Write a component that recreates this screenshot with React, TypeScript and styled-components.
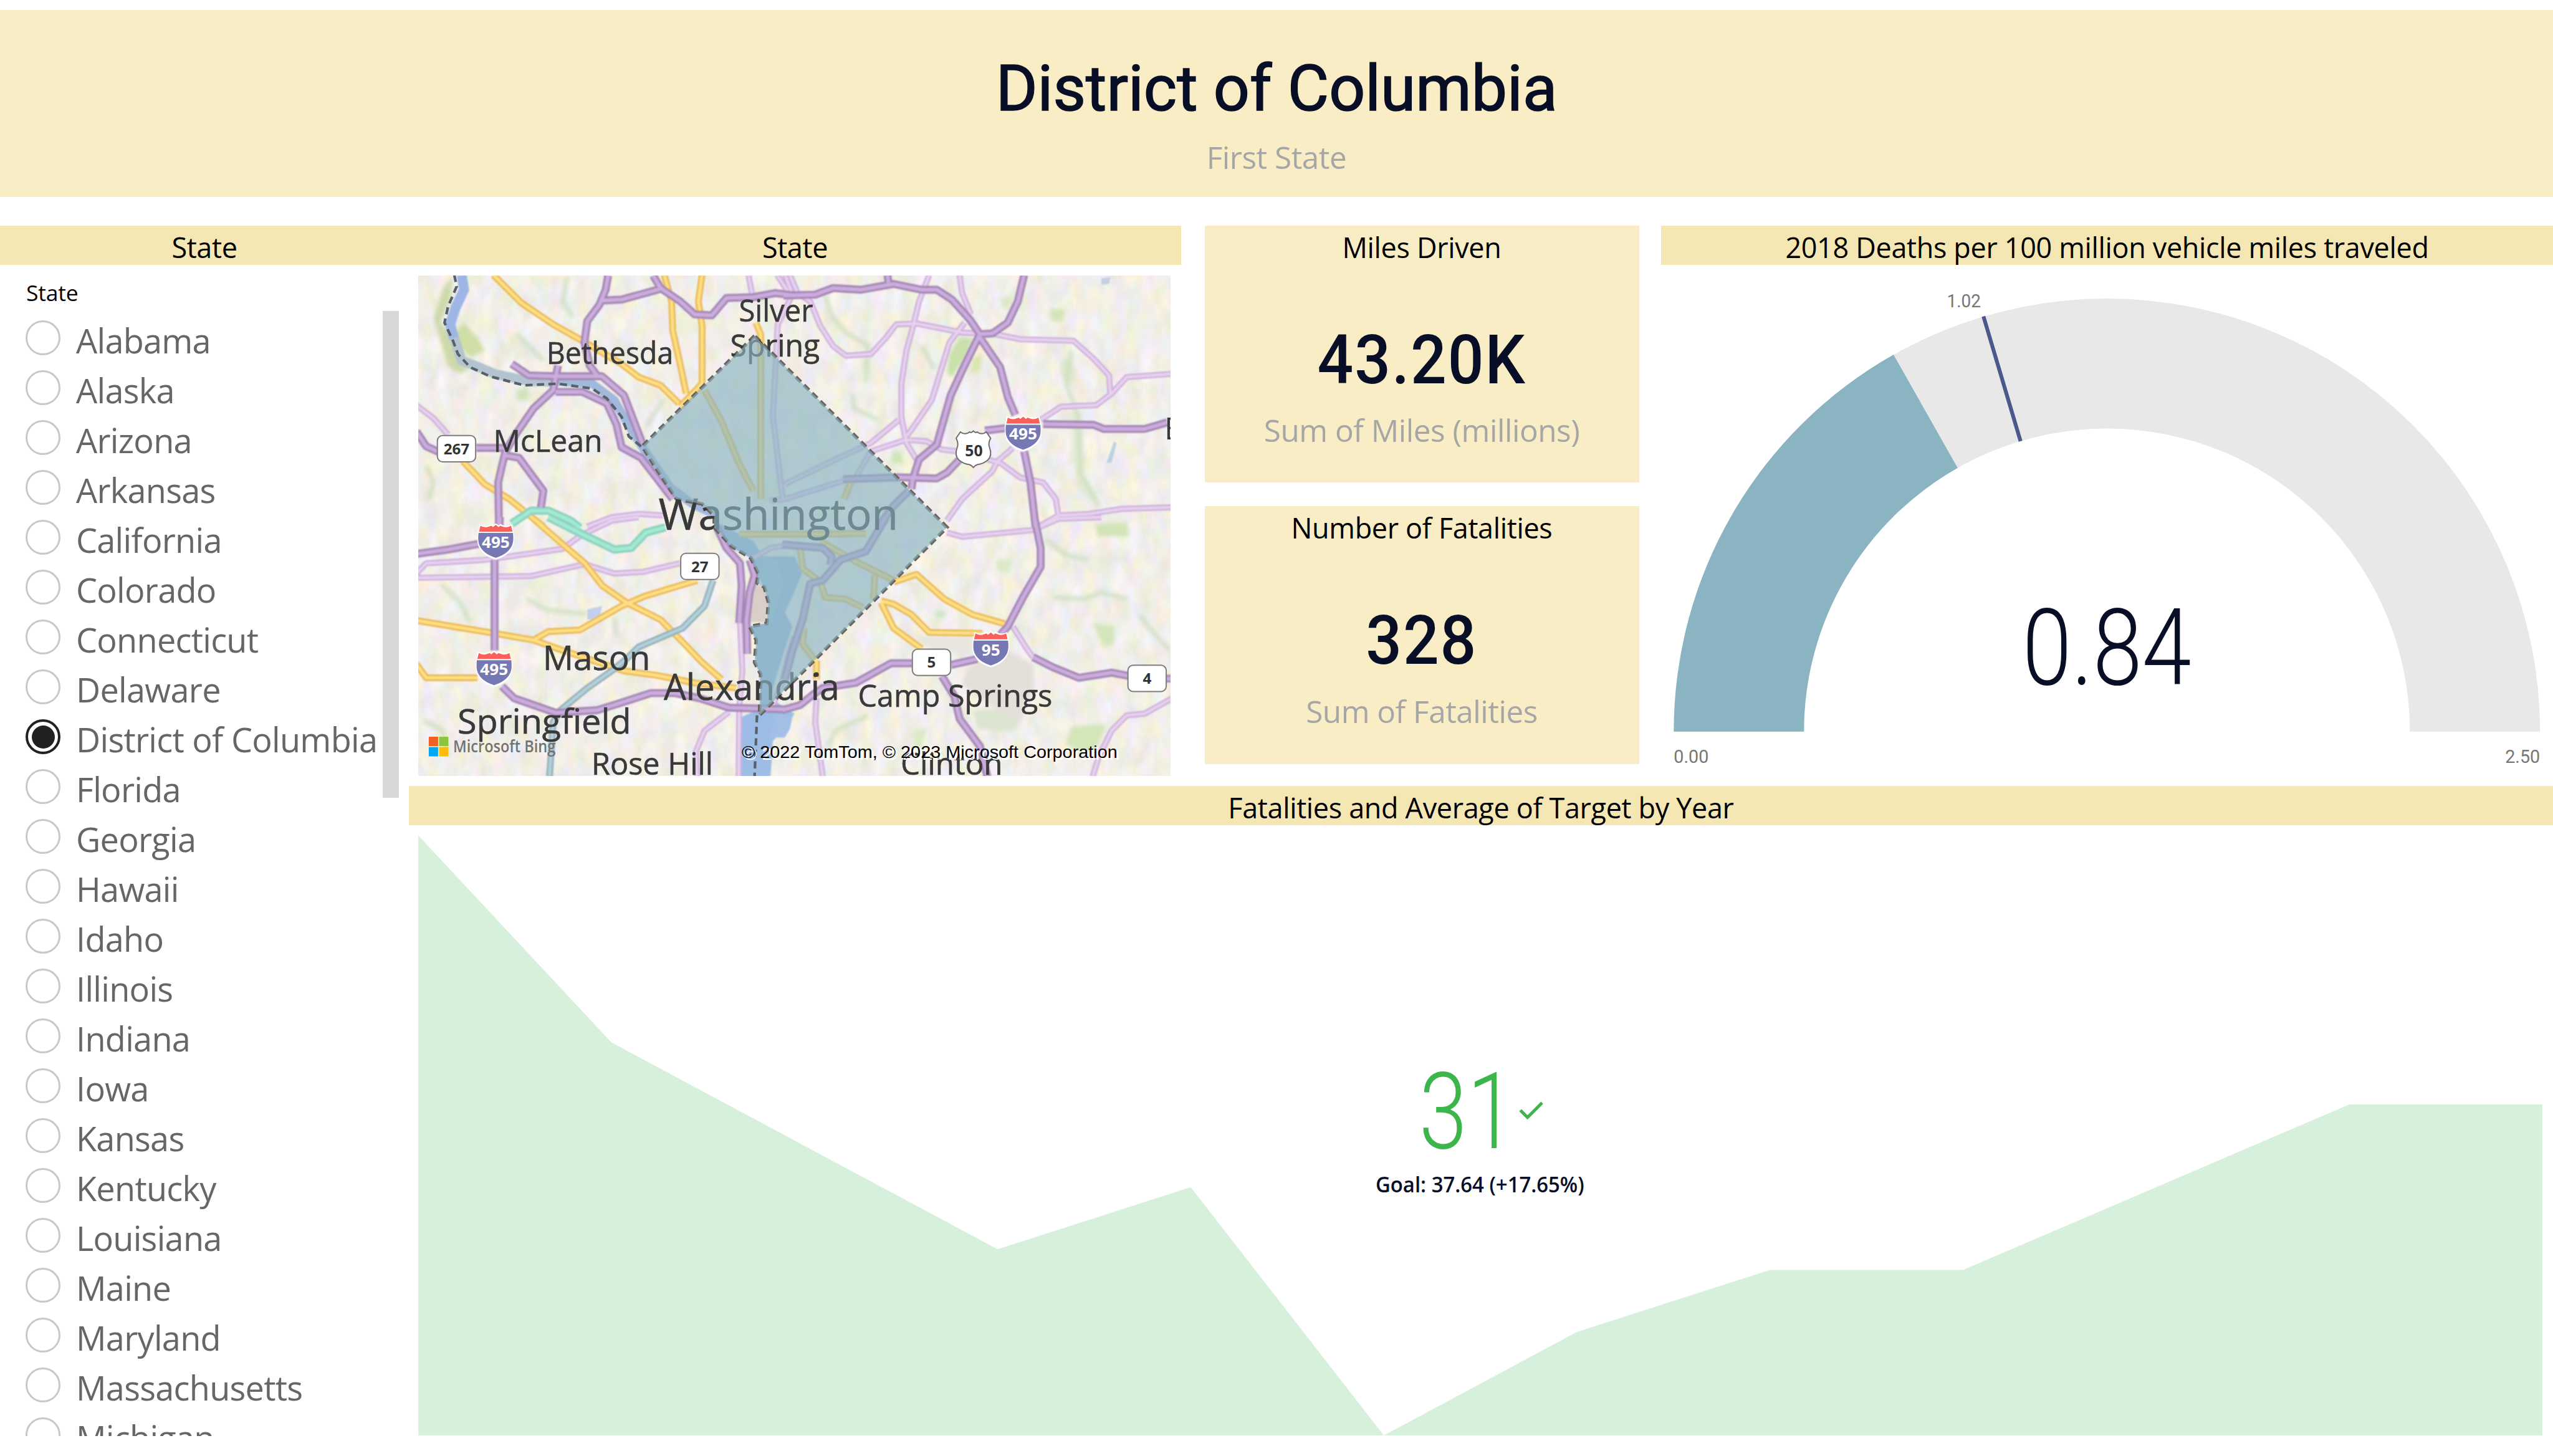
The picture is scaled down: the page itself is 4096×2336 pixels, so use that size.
import React from "react";
import styled, { createGlobalStyle } from "styled-components";

const sans = `"Open Sans", "Noto Sans", sans-serif`;
const din = `Roboto, "Open Sans", sans-serif`;

const GlobalStyle = createGlobalStyle`
  * { box-sizing: border-box; }
  body { margin: 0; background: #fff; font-family: ${sans}; }
`;

const Page = styled.div`
  width: 4096px;
  height: 2336px;
  padding-top: 16px;
  overflow: hidden;
  background: #fff;
  display: flex;
  flex-direction: column;
  gap: 46px;
`;

const Header = styled.header`
  height: 300px;
  flex: none;
  background: #f9edc6;
  display: flex;
  flex-direction: column;
  align-items: center;
  padding-top: 66px;
`;

const HeaderTitle = styled.h1`
  margin: 0;
  font: 400 102px/120px ${din};
  letter-spacing: 0;
  color: #070e26;
  -webkit-text-stroke: 1.6px #070e26;
`;

const Caption = styled.div<{ $top: number }>`
  margin-top: ${(p) => p.$top}px;
  font-size: 49.5px;
  line-height: 68px;
  letter-spacing: -0.5px;
  color: #a6a6a6;
`;

const Body = styled.main`
  display: grid;
  grid-template-columns: 656px 3440px;
  height: 1942px;
`;

const VisualTitle = styled.h2<{ $plain?: boolean }>`
  margin: 0;
  height: 63px;
  flex: none;
  padding-top: 4px;
  text-align: center;
  font-size: 45px;
  font-weight: 400;
  line-height: 61px;
  letter-spacing: -0.36px;
  white-space: nowrap;
  color: #000;
  background: ${(p) => (p.$plain ? "transparent" : "#f4e7b3")};
`;

const Slicer = styled.section`
  display: flex;
  flex-direction: column;
  min-height: 0;
`;

const SlicerHead = styled.div`
  padding: 20px 0 0 42px;
  font-size: 35.5px;
  line-height: 48px;
  letter-spacing: -0.2px;
  height: 74px;
  flex: none;
`;

const SlicerBody = styled.div`
  flex: 1;
  min-height: 0;
  display: flex;
  overflow: hidden;
`;

const StateList = styled.ul`
  list-style: none;
  margin: 0;
  padding: 3px 0 0 41px;
  width: 614px;
  flex: none;
`;

const StateRow = styled.li`
  height: 80px;
  display: flex;
  align-items: center;
  gap: 25px;
`;

const Radio = styled.span<{ $on: boolean }>`
  width: 56px;
  height: 56px;
  flex: none;
  border-radius: 50%;
  border: ${(p) => (p.$on ? "4px solid #212121" : "3.6px solid #c8c8c8")};
  display: grid;
  place-items: center;
  &::after {
    content: "";
    width: 37px;
    height: 37px;
    border-radius: 50%;
    background: ${(p) => (p.$on ? "#212121" : "transparent")};
  }
`;

const StateName = styled.span`
  padding-top: 8px;
  font-size: 54px;
  line-height: 72px;
  letter-spacing: -0.7px;
  color: #666;
  white-space: nowrap;
`;

const ScrollThumb = styled.div`
  width: 26px;
  height: 781px;
  background: #d9d8d6;
`;

const Right = styled.div`
  display: grid;
  grid-template-rows: 899px 1043px;
`;

const TopRow = styled.div`
  display: grid;
  grid-template-columns: 1239px 735px 1431px;
  justify-content: space-between;
`;

const Visual = styled.section`
  display: flex;
  flex-direction: column;
  min-width: 0;
`;

const MapFrame = styled.div`
  margin: 17px 0 0 15px;
  width: 1207px;
  height: 803px;
  overflow: hidden;
  svg { display: block; }
`;

const Cards = styled.div`
  padding: 0 18px 0 20px;
  display: flex;
  flex-direction: column;
  gap: 38px;
`;

const Card = styled.section<{ $h: number }>`
  height: ${(p) => p.$h}px;
  background: #f9edc6;
  display: flex;
  flex-direction: column;
  align-items: center;
`;

const CardValue = styled.div`
  margin-top: 93px;
  font: 500 110px/120px ${din};
  letter-spacing: 2px;
  transform: scaleX(0.925);
  color: #070e26;
`;

const Drawing = styled.svg`
  display: block;
  flex: none;
`;

const Attribution = styled.text`
  font-family: "Liberation Sans", Arial, sans-serif;
  font-size: 35.5px;
  fill: #000;
  text-shadow: 3px 3px 0 #fff;
`;

const states = [
  "Alabama", "Alaska", "Arizona", "Arkansas", "California", "Colorado", "Connecticut",
  "Delaware", "District of Columbia", "Florida", "Georgia", "Hawaii", "Idaho", "Illinois",
  "Indiana", "Iowa", "Kansas", "Kentucky", "Louisiana", "Maine", "Maryland",
  "Massachusetts", "Michigan",
];

/* ---------- map ---------- */

// The map is digitised in four sheets; each has its own origin and scale.
const sheets: Record<number, [number, number, number, number]> = {
  1: [860, 560, 0.5102, 0.3444],
  2: [1640, 560, 0.5293, 0.3444],
  3: [860, 1080, 0.5102, 0.3571],
  4: [1640, 1080, 0.5293, 0.3571],
};

function pts(sheet: number, src: string) {
  const [ox, oy, sx, sy] = sheets[sheet];
  const n = src.trim().split(/\s+/).map(Number);
  const out: string[] = [];
  for (let i = 0; i < n.length; i += 2) {
    out.push(`${(ox + n[i] * sx).toFixed(1)} ${(oy + n[i + 1] * sy).toFixed(1)}`);
  }
  return out.join(" L");
}
const line = (sheet: number, src: string) => "M" + pts(sheet, src);

const motorways: [number, string][] = [
  [1, "805 44 795 130 770 220 720 320 708 450 730 590 765 660"],
  [1, "990 44 1020 120 1100 200 1160 280 1230 285 1290 180 1400 175 1490 150 1568 165"],
  [1, "780 195 860 190 1020 125"],
  [1, "410 580 480 650 590 655 780 655 870 770 950 1080"],
  [1, "600 590 580 740 500 850 430 1000 385 1110 370 1200 355 1300 358 1568"],
  [1, "590 750 700 750 800 820 840 950 860 1085 940 1150 1070 1400"],
  [1, "20 990 60 1080 120 1120"],
  [1, "265 1090 395 1090"],
  [1, "385 1135 440 1150 500 1270 540 1350 530 1450"],
  [2, "-5 165 120 160 190 120 300 130 430 95 540 130 600 130 660 190 730 310 770 400"],
  [2, "405 40 410 95"],
  [2, "945 40 920 200 880 330 820 395 770 400 700 620 655 770 620 960 600 1070 530 1160 505 1280 500 1340"],
  [2, "770 420 850 600 880 780 910 890"],
  [2, "945 1110 970 1300 990 1568"],
  [2, "230 1280 450 1268 600 1275 640 1240 690 1160"],
  [2, "790 985 870 970"],
  [2, "1020 945 1220 950 1260 975 1420 975 1510 935"],
  [2, "490 1350 430 1440 370 1568"],
  [3, "20 215 150 190 280 155"],
  [3, "362 0 360 60"],
  [3, "340 250 340 780"],
  [3, "370 990 420 1060 590 1145 760 1130 850 1090 980 1030 1080 1030 1180 1060 1300 1115 1530 1125"],
  [3, "1250 60 1290 180 1345 270 1352 400 1342 620"],
  [3, "1385 250 1405 340 1385 440 1372 600 1375 800"],
  [4, "985 0 1010 180 1010 290 940 470 880 640 850 690"],
  [4, "-10 1130 60 1100 110 1040 150 1000 280 970 420 855 510 855"],
  [4, "655 865 760 830"],
  [4, "980 820 1060 880 1160 940 1290 910 1360 930"],
  [4, "1500 945 1530 945"],
  [4, "620 930 670 1050 690 1180 770 1340 800 1520"],
  [4, "-10 160 150 180 185 230 180 280"],
  [4, "400 0 320 200 220 250 150 370 100 390 70 600 30 780 0 950"],
];

const highways: [number, string][] = [
  [1, "20 830 90 910 150 1010"],
  [1, "720 1568 820 1510 930 1490 1030 1500"],
  [1, "1380 40 1400 200"],
  [1, "1530 40 1560 160 1500 340 1480 900 1520 1400"],
  [2, "20 40 50 150 100 200 140 350 190 470 240 530 340 520 400 420 440 340 520 335 620 365 700 390 830 400 930 430 1140 440 1220 550 1280 650 1285 760"],
  [2, "-30 40 20 160"],
  [2, "570 40 530 200 510 330 480 500 460 700 460 900 480 1060 520 1160"],
  [2, "690 40 700 150 735 280"],
  [2, "710 330 650 450 620 600 580 800 500 980 480 1020"],
  [2, "450 920 340 1060 200 1160 0 1310"],
  [2, "340 1110 480 1040 560 1050 620 1100 680 1110"],
  [2, "1010 920 1090 840 1230 830 1290 760 1350 660 1530 640"],
  [2, "900 1090 840 1170 820 1230 700 1400 640 1530"],
  [2, "800 1160 850 1180 930 1270 1020 1300 1070 1400 1080 1500 1200 1490 1330 1460 1530 1450"],
  [2, "1080 1500 1010 1560"],
  [2, "-60 1410 0 1400 230 1290"],
  [2, "340 1110 280 1270"],
  [3, "20 355 490 345 600 310 710 275 830 330 950 320 1100 270"],
  [3, "20 330 60 270 300 250 500 210 620 185 690 110 820 20 930 0"],
  [3, "1345 600 1355 900 1342 1120 1340 1520"],
  [3, "1300 1140 1200 1250 1165 1370 1170 1520"],
  [3, "1568 160 1470 180 1400 240"],
  [3, "1568 700 1540 830 1520 960 1480 1100"],
  [4, "900 640 960 780 980 820"],
  [4, "640 90 700 115 980 75 1080 10 1250 0"],
  [4, "125 1060 120 1200 150 1520"],
  [4, "1530 1060 1420 1150 1350 1160 1290 1250 1240 1400 1215 1520"],
];

const arterials: [number, string][] = [
  [1, "335 40 450 210 580 340 700 440 860 580 930 660 1020 710 1095 820"],
  [1, "1035 40 1065 200 1070 380 1100 580 1125 760"],
  [1, "1190 40 1175 200 1190 350 1190 700 1100 840"],
  [1, "210 1170 300 1310 400 1400 540 1568"],
  [1, "1410 330 1430 400 1430 1400"],
  [1, "1200 740 1270 930 1340 1180 1400 1350"],
  [2, "260 1300 235 1400"],
  [3, "500 10 620 160 710 270 780 400 880 500 1020 600 1110 730 1190 850 1270 950"],
  [3, "20 605 340 680 500 720 560 670 690 660 860 520 960 460 1170 370"],
  [3, "500 720 620 780 870 900 1000 925 1160 970 1330 1000"],
  [3, "20 860 60 940 270 940"],
  [4, "430 380 520 335 630 480 740 570 870 625"],
  [4, "380 490 430 510 500 570 570 675 780 680"],
  [4, "380 500 430 650 540 770"],
  [4, "125 840 125 950"],
  [4, "60 170 70 300 140 380 160 470 240 480 310 530"],
  [4, "-180 100 140 100 320 95"],
  [4, "140 140 280 260 430 370"],
  [4, "355 340 350 480"],
  [4, "75 650 70 740 120 840"],
];

const tealRoads: [number, string][] = [
  [1, "410 1550 490 1470 560 1470 650 1530 690 1575"],
  [3, "560 0 700 100 830 190 900 180 960 90 1040 60"],
];

const slateRoads: [number, string][] = [
  [3, "1235 370 1200 520 1110 650 930 760 880 830 820 900 720 1000 610 1130 580 1200 565 1520"],
];

const creeks: [number, string][] = [
  [1, "640 44 620 200 660 300"],
  [1, "430 400 540 560"],
  [1, "1030 800 960 960"],
  [1, "60 1200 90 1300 70 1400"],
  [2, "160 160 180 280 240 390 330 470 320 690"],
  [2, "270 760 270 850 370 920"],
  [2, "1130 500 1110 700 1160 900 1170 1250 1240 1440"],
  [2, "540 470 590 610"],
  [3, "120 390 200 500 240 620"],
  [3, "470 480 560 545 720 565"],
  [3, "50 1190 130 1250 150 1400"],
  [3, "830 590 840 700"],
  [4, "1030 130 1110 220 1200 250"],
  [4, "1400 570 1440 650 1520 780"],
  [4, "330 1160 200 1250 170 1340"],
  [4, "1060 470 1180 480 1250 440 1350 480"],
];

const parks: [number, string, string][] = [
  [1, "170 44 130 120 90 300 110 400 150 600 200 640 240 600 180 430 120 330 160 180", "#cdd9ab"],
  [1, "215 330 270 420 300 500 240 540 190 470 170 400", "#cfdfa6"],
  [1, "430 740 480 720 480 800 430 800", "#cfe3bb"],
  [2, "690 420 745 420 720 520 660 660 640 640 650 520", "#c9e0a8"],
  [2, "745 540 780 520 770 620 730 640", "#d9e6ae"],
  [2, "1045 245 1110 250 1095 325 1050 320", "#d6e5b8"],
  [2, "1090 560 1130 540 1150 640 1130 720 1090 640", "#dde8cd"],
  [2, "425 1110 460 1110 470 1190 420 1180", "#cfe6b8"],
  [2, "1130 870 1165 870 1180 1250 1240 1440 1150 1320", "#e0ead0"],
  [2, "850 180 900 170 890 240 860 240", "#dde8c8"],
  [4, "1225 40 1350 30 1360 110 1235 115", "#d2e4b7"],
  [4, "830 250 900 245 880 330 840 310", "#dbe9c8"],
  [4, "1215 620 1300 635 1300 740 1260 760", "#d3e6bb"],
  [4, "590 550 640 550 625 590 600 590", "#cbe6c6"],
  [4, "1130 1225 1270 1215 1230 1350 1190 1390 1110 1330", "#d3e6b8"],
  [4, "740 1130 860 1120 930 1200 900 1255 760 1240", "#dce5d0"],
  [4, "510 1250 560 1230 540 1350 510 1340", "#dbeac6"],
  [4, "720 880 880 780 980 860 980 1000 930 1200 830 1120 700 980", "#e3dfd9"],
  [4, "500 700 740 700 740 800 600 790", "#e8e6df"],
];

const districtOutline =
  "M" + pts(1, "1405 410 945 1080 1000 1210 1085 1400 1190 1430 1240 1500") +
  " L" + pts(3, "1240 60 1310 170 1390 240 1420 330 1415 385 1445 410 1462 500 1455 622 1385 640 1412 720 1405 850 1430 920 1425 1160") +
  " L" + pts(4, "640 60") + " Z";

function Roads({ set, casing, core, w }: { set: [number, string][]; casing: string; core: string; w: number }) {
  const d = set.map(([s, p]) => line(s, p)).join(" ");
  return (
    <g fill="none" strokeLinejoin="round">
      <path d={d} stroke={casing} strokeWidth={w} />
      <path d={d} stroke={core} strokeWidth={w * 0.46} />
    </g>
  );
}

const places: [string, number, number, number, number][] = [
  ["Bethesda", 1142, 760, 265, 65],
  ["Silver", 1544, 672, 155, 65],
  ["Spring", 1526, 744, 187, 65],
  ["McLean", 1031, 943, 228, 65],
  ["Washington", 1376, 1107, 501, 90],
  ["Mason", 1134, 1400, 225, 71],
  ["Alexandria", 1387, 1462, 367, 75],
  ["Springfield", 956, 1533, 363, 71],
  ["Camp Springs", 1793, 1476, 406, 64],
  ["Clinton", 1882, 1618, 213, 65],
  ["Rose Hill", 1236, 1618, 254, 65],
];

function Interstate({ x, y, n }: { x: number; y: number; n: string }) {
  return (
    <g transform={`translate(${x} ${y})`}>
      <path
        d="M-34 2 Q-28 6 -22 5 Q-15 5 -10 1 L-6 4 L0 0 L6 4 L10 1 Q15 5 22 5 Q28 6 34 2 L38 22 Q40 38 36 48 Q28 68 0 76 Q-28 68 -36 48 Q-40 38 -38 22 Z"
        fill="#fff"
      />
      <path d="M-32 5 Q-26 9 -18 8 L-9 5 L-6 8 L0 3 L6 8 L9 5 L18 8 Q26 9 32 5 L35 17.5 L-35 17.5 Z" fill="#f9605c" />
      <path d="M-36 20 L36 20 Q38 37 34 46 Q26 64 0 72 Q-26 64 -34 46 Q-38 37 -36 20 Z" fill="#7678b3" />
      <text x="0" y="51" textAnchor="middle" textLength={n.length * 19.5} lengthAdjust="spacingAndGlyphs" fontSize="33" fontWeight="700" fill="#fff">{n}</text>
    </g>
  );
}

function RouteBox({ x, y, n }: { x: number; y: number; n: string }) {
  return (
    <g transform={`translate(${x} ${y})`}>
      <rect x="1" y="1" width="80" height="55" rx="11" fill="#fff" stroke="#7d7d7d" strokeWidth="2.6" />
      <text x="41" y="40" textAnchor="middle" textLength={n.length * 18} lengthAdjust="spacingAndGlyphs" fontSize="31" fontWeight="700" fill="#333">{n}</text>
    </g>
  );
}

function StateMap() {
  return (
    <svg width="1207" height="803" viewBox="874 575 1572 1046" preserveAspectRatio="none" fontFamily={`"Open Sans", sans-serif`}>
      <defs>
        <filter id="terrain" x="0" y="0" width="100%" height="100%" colorInterpolationFilters="sRGB">
          <feTurbulence type="fractalNoise" baseFrequency="0.034 0.02" numOctaves="4" seed="11" />
          <feColorMatrix values="0.12 0 0 0 0.887  0.04 0.08 0 0 0.876  0 0 0.24 0 0.79  0 0 0 0 1" />
        </filter>
        <filter id="soften"><feGaussianBlur stdDeviation="4.5" /></filter>
        <filter id="tile"><feGaussianBlur stdDeviation="1.1" /></filter>
      </defs>
      <rect x="874" y="575" width="1572" height="1046" fill="#f1ede4" />
      <rect x="874" y="575" width="1572" height="1046" filter="url(#terrain)" />
      <g filter="url(#soften)">
        {parks.map(([s, p, c], i) => <path key={i} d={line(s, p) + "Z"} fill={c} />)}
        <path d={creeks.map(([s, p]) => line(s, p)).join(" ")} fill="none" stroke="#c9dcbb" strokeWidth="9" strokeLinejoin="round" opacity="0.75" />
      </g>
      <g filter="url(#tile)">
        <path d={line(1, "205 40 215 130 180 240 158 340 175 430")} fill="none" stroke="#9db6e6" strokeWidth="21" strokeLinejoin="round" />
        <path d={line(1, "175 420 205 560 260 590 340 640 480 685 590 690")} fill="none" stroke="#b3c3cf" strokeWidth="20" strokeLinejoin="round" />
        <path d={line(1, "590 685 740 700 830 800 880 930 930 1050 980 1160 1060 1330 1150 1430 1250 1500")} fill="none" stroke="#a0b8dc" strokeWidth="18" strokeLinejoin="round" />
        <path
          d={line(3, "1240 20 1330 90 1400 140 1440 230 1568 230 1600 330 1530 560 1560 640 1500 900 1470 1060 1568 1150 1530 1240 1480 1310 1470 1520 1350 1520 1350 1170 1430 1120 1425 920 1410 850 1415 740 1385 640 1455 620 1460 500 1440 400 1415 330 1390 240 1270 150") + "Z"}
          fill="#9dbde6"
        />
        <path d={line(3, "1440 230 1500 260 1520 400 1470 640 1465 500 1430 330") + "Z"} fill="#9dcfd8" opacity="0.6" />
        <path d={line(3, "1390 390 1440 400 1460 500 1450 615 1385 615") + "Z"} fill="#d9cfc8" />
        <path d={line(4, "-30 1150 30 1165 20 1240 0 1290 -60 1290") + "Z"} fill="#a3bfe6" />
        <path d={line(3, "720 540 780 520 770 590 720 600") + "Z"} fill="#c3cfec" />
        <path d={line(2, "1300 1050 1310 1060 1290 1180 1270 1180") + "Z"} fill="#b9d3e2" />
        <path d={line(2, "1250 60 1285 55 1280 95 1250 100") + "Z"} fill="#c5cfe0" />

        <Roads set={highways} casing="#cfb0dc" core="#e6d2ef" w={12.5} />
        <Roads set={arterials} casing="#ebb857" core="#fee084" w={14} />
        <Roads set={tealRoads} casing="#8dd1c0" core="#a2e9d2" w={17} />
        <Roads set={slateRoads} casing="#98afb8" core="#b0d2dc" w={14} />
        <Roads set={motorways} casing="#a587b4" core="#caadde" w={16.5} />
      </g>

      <g fill="none" stroke="#55606a" strokeWidth="5.5" strokeDasharray="15 9">
        <path d={line(1, "175 40 185 110 150 230 135 330 170 440 190 520 240 600 320 655 460 710 600 700 740 730 800 790 860 900 890 1020 940 1080")} />
        <path d={districtOutline} stroke="#6b6460" strokeWidth="7.5" />
        <path d={line(3, "1415 1160 1405 1520")} />
      </g>

      <g fill="#393939">
        {places.map(([t, x, y, w, fs]) => (
          <text key={t} x={x} y={y} fontSize={fs} textLength={w} lengthAdjust="spacingAndGlyphs" stroke="#393939" strokeWidth="0.8">{t}</text>
        ))}
        <text x="2433" y="918" fontSize="65">B</text>
        <circle cx="1706" cy="1409" r="5" />
      </g>

      <path d={districtOutline} fill="#8ab4c2" fillOpacity="0.65" />

      <RouteBox x={913} y={908.5} n="267" />
      <RouteBox x={1421.5} y={1154.5} n="27" />
      <RouteBox x={1905.5} y={1355} n="5" />
      <RouteBox x={2356} y={1388.5} n="4" />
      <Interstate x={1036} y={1093} n="495" />
      <Interstate x={1032.5} y={1359} n="495" />
      <Interstate x={2138} y={867} n="495" />
      <Interstate x={2070.5} y={1318} n="95" />
      <g transform="translate(2034 899)">
        <path
          d="M-27 3 Q-20 9 -11 5 L-8 3 Q-4 6 0 1 Q4 6 8 3 L11 5 Q20 9 27 3 L36 16 Q30 28 34 36 Q40 52 30 62 Q20 70 9 71 Q3 73 0 77 Q-3 73 -9 71 Q-20 70 -30 62 Q-40 52 -34 36 Q-30 28 -36 16 Z"
          fill="#fff" stroke="#6d6d6d" strokeWidth="2.6"
        />
        <text x="1" y="54" textAnchor="middle" textLength="37" lengthAdjust="spacingAndGlyphs" fontSize="32" fontWeight="700" fill="#333">50</text>
      </g>

      <rect x="896" y="1539" width="19.5" height="19.5" fill="#f25f22" />
      <rect x="917.5" y="1539" width="19.5" height="19.5" fill="#8cc63f" />
      <rect x="896" y="1560.5" width="19.5" height="19.5" fill="#00a8ef" />
      <rect x="917.5" y="1560.5" width="19.5" height="19.5" fill="#fdbc0c" />
      <text x="947" y="1571" fontSize="35" fontWeight="600" fill="#737373" textLength="214" lengthAdjust="spacingAndGlyphs">Microsoft Bing</text>
      <Attribution x="1550" y="1583.5" textLength="785" lengthAdjust="spacingAndGlyphs">
        © 2022 TomTom, © 2023 Microsoft Corporation
      </Attribution>
    </svg>
  );
}

/* ---------- gauge ---------- */

function Gauge({ value, target, max }: { value: number; target: number; max: number }) {
  const cx = 4402, cy = 1529, R = 905, r = 633;
  const at = (v: number, rad: number) => {
    const a = Math.PI * (1 - v / max);
    return `${(cx + rad * Math.cos(a)).toFixed(2)} ${(cy - rad * Math.sin(a)).toFixed(2)}`;
  };
  const band = (a: number, b: number) =>
    `M${at(a, R)} A${R} ${R} 0 0 1 ${at(b, R)} L${at(b, r)} A${r} ${r} 0 0 0 ${at(a, r)} Z`;
  return (
    <Drawing width="1431" height="836" viewBox="3470.5 554 1863.5 1088.7" fontFamily={din}>
      <path d={band(0, max)} fill="#e8e8e8" />
      <path d={band(0, value)} fill="#8ab4c2" />
      <path d={`M${at(target, R)} L${at(target, r)}`} stroke="#4a588b" strokeWidth="8" />
      <g fontSize="38.5" fill="#777">
        <text x="4067.5" y="643" textLength="71" lengthAdjust="spacingAndGlyphs">{target.toFixed(2)}</text>
        <text x="3497" y="1594" textLength="73" lengthAdjust="spacingAndGlyphs">0.00</text>
        <text x="5234" y="1594" textLength="73" lengthAdjust="spacingAndGlyphs">{max.toFixed(2)}</text>
      </g>
      <text x="4402" y="1430" textAnchor="middle" fontSize="222" fontWeight="300" fill="#070e26" textLength="353" lengthAdjust="spacingAndGlyphs">
        {value.toFixed(2)}
      </text>
    </Drawing>
  );
}

/* ---------- KPI trend ---------- */

const fatalities = [44, 34, 29, 24, 27, 15, 20, 23, 23, 27, 31, 31];

function Trend() {
  const left = 874, right = 5312, base = 3000, unit = 43.22;
  const step = (right - left) / (fatalities.length - 1);
  const low = Math.min(...fatalities);
  const top = fatalities.map((v, i) => `L${left + i * step} ${base - (v - low) * unit}`).join(" ");
  return (
    <Drawing width="3440" height="979" viewBox="854.3 1725 4479.8 1275" fontFamily={din}>
      <path d={`M${left} ${base} ${top} L${right} ${base} Z`} fill="#d7f0db" />
      <text x="2965" y="2400" fontSize="223" fontWeight="300" fill="#3cb54a" textLength="201" lengthAdjust="spacingAndGlyphs">31</text>
      <path d="M3176.5 2320.5 L3191.5 2335.5 L3222 2305" fill="none" stroke="#3cb54a" strokeWidth="6.5" />
      <text x="2874" y="2492" fontFamily={sans} fontSize="43.5" fontWeight="600" fill="#070e26" textLength="436" lengthAdjust="spacingAndGlyphs">
        Goal: 37.64 (+17.65%)
      </text>
    </Drawing>
  );
}

export default function App() {
  return (
    <>
      <GlobalStyle />
      <Page>
        <Header>
          <HeaderTitle>District of Columbia</HeaderTitle>
          <Caption $top={16}>First State</Caption>
        </Header>
        <Body>
          <Slicer>
            <VisualTitle>State</VisualTitle>
            <SlicerHead>State</SlicerHead>
            <SlicerBody>
              <StateList>
                {states.map((s) => (
                  <StateRow key={s}>
                    <Radio $on={s === "District of Columbia"} />
                    <StateName>{s}</StateName>
                  </StateRow>
                ))}
              </StateList>
              <ScrollThumb />
            </SlicerBody>
          </Slicer>
          <Right>
            <TopRow>
              <Visual>
                <VisualTitle>State</VisualTitle>
                <MapFrame><StateMap /></MapFrame>
              </Visual>
              <Cards>
                <Card $h={412}>
                  <VisualTitle $plain>Miles Driven</VisualTitle>
                  <CardValue>43.20K</CardValue>
                  <Caption $top={18}>Sum of Miles (millions)</Caption>
                </Card>
                <Card $h={414}>
                  <VisualTitle $plain>Number of Fatalities</VisualTitle>
                  <CardValue>328</CardValue>
                  <Caption $top={19}>Sum of Fatalities</Caption>
                </Card>
              </Cards>
              <Visual>
                <VisualTitle>2018 Deaths per 100 million vehicle miles traveled</VisualTitle>
                <Gauge value={0.84} target={1.02} max={2.5} />
              </Visual>
            </TopRow>
            <Visual>
              <VisualTitle>Fatalities and Average of Target by Year</VisualTitle>
              <Trend />
            </Visual>
          </Right>
        </Body>
      </Page>
    </>
  );
}
